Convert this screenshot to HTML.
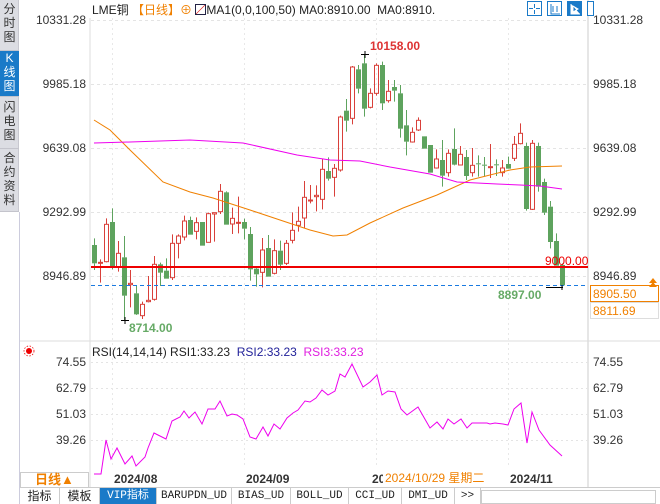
<!DOCTYPE html>
<html><head><meta charset="utf-8">
<style>
*{margin:0;padding:0;box-sizing:border-box}
body{width:660px;height:504px;background:#fff;position:relative;overflow:hidden;font-family:"Liberation Sans","Noto Sans CJK SC",sans-serif;color:#222}
.abs{position:absolute}
.side{left:0;top:0;width:19px;height:212px;background:#dcdde3;border-right:1px solid #c8c8d0}
.side div{position:absolute;left:0;width:19px;font-size:12px;line-height:14px;text-align:center;color:#333;border-bottom:1px solid #c4c4cc}
.ax{font-size:12px;color:#333;position:absolute;line-height:12px}
.tab{position:absolute;top:488px;height:16px;font-size:11px;line-height:16px;text-align:center;border-right:1px solid #ccc;color:#222;font-family:"Liberation Mono","Noto Sans CJK SC",monospace}
</style></head><body>
<div class="abs side">
 <div style="top:2px;height:49px">分<br>时<br>图</div>
 <div style="top:51px;height:46px;background:#1a7ac8;color:#fff">K<br>线<br>图</div>
 <div style="top:100px;height:49px">闪<br>电<br>图</div>
 <div style="top:151px;height:61px">合<br>约<br>资<br>料</div>
</div>
<div class="abs" style="left:0;top:212px;width:20px;height:292px;border-right:1px solid #ccd"></div>
<svg class="abs" style="left:0;top:0" width="660" height="504" id="s"></svg>

<div class="abs" style="left:92px;top:3px;font-size:12px;white-space:nowrap;line-height:14px">LME铜 <span style="color:#f08000">【日线】</span><span style="color:#f08000">⊕</span> <span style="display:inline-block;width:11px;height:11px;border:1px solid #224;vertical-align:-1px;background:linear-gradient(135deg,#fff 45%,#d22 50%,#fff 55%)"></span>MA1(0,0,100,50) MA0:8910.00 &nbsp;MA0:8910.</div>

<div class="ax" style="left:20px;top:14px;width:66px;text-align:right">10331.28</div>
<div class="ax" style="left:20px;top:78px;width:66px;text-align:right">9985.18</div>
<div class="ax" style="left:20px;top:142px;width:66px;text-align:right">9639.08</div>
<div class="ax" style="left:20px;top:206px;width:66px;text-align:right">9292.99</div>
<div class="ax" style="left:20px;top:270px;width:66px;text-align:right">8946.89</div>
<div class="ax" style="left:593px;top:14px">10331.28</div>
<div class="ax" style="left:593px;top:142px">9639.08</div>
<div class="ax" style="left:593px;top:78px">9985.18</div>
<div class="ax" style="left:593px;top:206px">9292.99</div>
<div class="ax" style="left:593px;top:270px">8946.89</div>
<div class="ax" style="left:590px;top:285px;width:69px;height:17px;border:1px solid #f08000;color:#f08000;padding:2px 0 0 2px">8905.50</div>
<div class="ax" style="left:590px;top:302px;width:69px;height:17px;border:1px solid #ddd;color:#f08000;padding:2px 0 0 2px">8811.69</div>
<div class="ax" style="left:370px;top:40px;color:#d33;font-weight:bold">10158.00</div>
<div class="ax" style="left:545px;top:255px;color:#e00">9000.00</div>
<div class="ax" style="left:498px;top:289px;color:#6a6;font-weight:bold">8897.00</div>
<div class="ax" style="left:129px;top:322px;color:#6a6;font-weight:bold">8714.00</div>

<div class="abs" style="left:92px;top:345px;font-size:12px;white-space:nowrap">RSI(14,14,14) RSI1:33.23 &nbsp;<span style="color:#22229a">RSI2:33.23</span> &nbsp;<span style="color:#e020e0">RSI3:33.23</span></div>
<div class="ax" style="left:20px;top:356px;width:66px;text-align:right">74.55</div>
<div class="ax" style="left:20px;top:382px;width:66px;text-align:right">62.79</div>
<div class="ax" style="left:20px;top:408px;width:66px;text-align:right">51.03</div>
<div class="ax" style="left:20px;top:434px;width:66px;text-align:right">39.26</div>
<div class="ax" style="left:593px;top:356px">74.55</div>
<div class="ax" style="left:593px;top:382px">62.79</div>
<div class="ax" style="left:593px;top:408px">51.03</div>
<div class="ax" style="left:593px;top:434px">39.26</div>

<div class="abs" style="left:20px;top:476px;width:69px;height:12px;"></div>
<div class="abs" style="left:20px;top:472px;width:69px;height:16px;border:1px solid #ccc;color:#f08000;font-weight:bold;font-size:13px;line-height:14px;padding-left:14px">日线▲</div>
<div class="ax" style="left:114px;top:473px;font-weight:bold">2024/08</div>
<div class="ax" style="left:246px;top:473px;font-weight:bold">2024/09</div>
<div class="ax" style="left:372px;top:473px;font-weight:bold">20</div>
<div class="ax" style="left:383px;top:472px;color:#f08000;background:#fff;padding:0 2px;height:14px;width:110px">2024/10/29 星期二</div>
<div class="ax" style="left:510px;top:473px;font-weight:bold">2024/11</div>

<div class="abs" style="left:20px;top:487px;width:640px;border-top:1px solid #ccc"></div>
<div class="tab" style="left:20px;width:40px;font-family:'Liberation Sans','Noto Sans CJK SC',sans-serif;font-size:12px">指标</div>
<div class="tab" style="left:60px;width:40px;font-family:'Liberation Sans','Noto Sans CJK SC',sans-serif;font-size:12px">模板</div>
<div class="tab" style="left:100px;width:57px;background:#1a7ac8;color:#fff">VIP指标</div>
<div class="tab" style="left:157px;width:75px">BARUPDN_UD</div>
<div class="tab" style="left:232px;width:59px">BIAS_UD</div>
<div class="tab" style="left:291px;width:58px">BOLL_UD</div>
<div class="tab" style="left:349px;width:53px">CCI_UD</div>
<div class="tab" style="left:402px;width:53px">DMI_UD</div>
<div class="tab" style="left:455px;width:26px">&gt;&gt;</div>
<div class="abs" style="left:481px;top:490px;width:175px;height:14px;border:1px solid #ccc"></div>

<script>
var s=document.getElementById('s'),h='';
function L(x1,y1,x2,y2,c,w,d){h+='<line x1="'+x1+'" y1="'+y1+'" x2="'+x2+'" y2="'+y2+'" stroke="'+c+'" stroke-width="'+(w||1)+'"'+(d?' stroke-dasharray="'+d+'"':'')+'/>';}
// frames
L(90,18,90,488,'#ddd');L(588,0,588,488,'#ccc');
L(20,341,660,341,'#ddd');
[20,84,148,212,276].forEach(function(y){L(91,y+.5,588,y+.5,'#e4e4e4',1,'3,3')});
[362,388,414,440].forEach(function(y){L(91,y+.5,588,y+.5,'#e4e4e4',1,'2,3')});
[112.5,244.5,376.5,508.5].forEach(function(x){L(x,18,x,468,'#e8e8e8',1,'2,3')});
var d4=[['g',645,700,625,720],['r',697,700,688,758],['r',583,695,565,697],['g',576,712,535,718],['r',670,712,633,725],['g',682,797,618,872],['r',760,764,720,832],['g',790,853,765,855],['r',823,857,815,867],['r',811,815,738,817],['r',703,808,678,812],['g',703,728,698,768],['g',722,746,685,746],['r',640,743,613,750],['r',618,640,613,685],['r',573,621,557,631],['g',570,614,560,614],['r',578,604,562,628],['g',576,647,576,647],['r',551,637,548,637],['r',548,552,548,635],['r',484,545,462,552],['g',487,584,484,584],['r',565,582,533,612],['r',577,579,500,610],['g',576,596,566,628],['g',612,718,591,752],['g',716,733,708,770],['r',660,727,624,772],['g',654,740,615,740],['r',662,730,628,733],['g',662,704,632,720],['r',640,700,630,705],['r',601,631,547,640],['r',574,586,530,605],['r',502,564,453,595],['r',510,513,465,520],['r',496,500,466,544],['r',418,508,387,538],['g',423,446,382,452],['r',415,442,402,500],['r',261,420,257,425],['g',242,272,207,305],['r',111,265,108,283],['g',118,176,105,190],['g',100,236,72,260],
['r',190,232,175,235],['r',106,190,100,197],['g',105,220,95,240],['r',184,212,150,218],['g',171,182,150,215],['g',190,296,165,323],['g',286,335,240,376],['r',307,336,292,338],['r',271,300,262,303],['g',319,356,319,356],['g',345,428,345,428],['r',387,414,358,416],['g',390,437,330,470],['r',370,428,358,440],['g',357,404,295,406],['r',373,405,348,406],['g',381,438,360,450],['r',406,428,354,440],['g',400,403,376,440],['g',404,407,381,440],['r',410,413,342,444],['g',403,406,388,438],['r',414,428,390,440],['g',402,416,380,416],['r',343,385,318,393],['r',310,341,280,343]];
var d5=[['g',138,327,128,332],['r',130,328,120,330],['g',138,260,128,275],['g',246,338,236,345],['g',320,426,303,445],['g',423,497,400,497],['g',495,556,490,560]];
var all=d4.map(function(c){return [c[0],30+c[1]/3,30+c[2]/3,30+c[3]/3,30+c[4]/3]}).concat(d5.map(function(c){return [c[0],100+c[1]/3,100+c[2]/3,100+c[3]/3,100+c[4]/3]}));
all.forEach(function(c,i){var x=Math.round(94.3+i*6)+.5;var col=c[0]=='g'?'#5ea35e':'#d9403a';
 L(x,c[3],x,c[1],col);L(x,c[2],x,c[4],col);
 var hh=Math.max(1,c[2]-c[1]);
 if(c[0]=='g')h+='<rect x="'+(x-2.5)+'" y="'+c[1]+'" width="5" height="'+hh+'" fill="'+col+'"/>';
 else h+='<rect x="'+(x-2)+'" y="'+c[1]+'" width="4" height="'+hh+'" fill="none" stroke="'+col+'" stroke-width="1"/>';
});
function P(pts,c,w){h+='<polyline fill="none" stroke="'+c+'" stroke-width="'+(w||1)+'" points="'+pts.map(function(p){return p.join(',')}).join(' ')+'"/>';}
P([[94,120],[110,130],[130,150],[163,182],[190,192],[213,198],[250,210],[280,220],[310,230],[333,236],[347,235],[370,223],[403,208],[437,195],[470,180],[510,170],[530,167],[562,166]],'#f08000');
P([[94,143],[130,142],[190,140],[243,143],[297,155],[330,160],[360,161],[390,167],[430,174],[457,182],[497,184],[520,185],[540,186],[562,189]],'#ee00ee');
L(91,267,588,267,'#ee0000',2);
L(91,285.5,588,285.5,'#1a7ae0',1,'4,3');
// markers
L(121,320.5,129,320.5,'#000');L(125,317,125,324,'#000');
L(361,54.5,369,54.5,'#000');L(365,51,365,58,'#000');
L(546,287.5,563,287.5,'#000');L(562,285,562,290,'#000');
// orange arrow at right
h+='<path d="M649 283 L653 278 L657 283 Z M649 287 L653 282 L657 287 Z" fill="#f08000"/>';
// rsi
P([[94,474],[101,474],[106,440],[111,459],[117,448],[125,464],[132,456],[136,466],[145,457],[148,448],[154,433],[166,439],[172,421],[180,417],[184,411],[189,418],[195,412],[202,424],[208,409],[215,409],[220,401],[227,416],[232,414],[237,415],[243,419],[250,437],[256,439],[263,427],[268,436],[274,424],[280,429],[287,418],[293,413],[298,410],[305,401],[310,402],[316,398],[322,390],[328,395],[335,391],[340,374],[345,377],[352,364],[363,387],[370,382],[377,375],[382,395],[388,391],[395,392],[401,409],[407,415],[418,407],[430,428],[437,422],[443,429],[448,419],[454,424],[461,419],[467,428],[472,423],[487,423],[490,424],[495,423],[503,424],[508,425],[514,409],[521,403],[527,443],[532,412],[539,430],[550,445],[562,456]],'#ee00ee');
// rsi icon
h+='<circle cx="29" cy="351" r="3" fill="#e00"/><circle cx="29" cy="351" r="5" fill="none" stroke="#e00" stroke-width="0.8" stroke-dasharray="1.5,1.5"/>';
// top right icons
[527,547,567].forEach(function(x,i){h+='<rect x="'+(x+.5)+'" y="1.5" width="14" height="14" fill="'+(i==2?'#1a7ac8':'#fff')+'" stroke="#1a7ac8"/>';});
h+='<rect x="587.5" y="1.5" width="6" height="14" fill="#fff" stroke="#1a7ac8"/>';
h+='<path d="M534.5 4v4M534.5 10v4M529 8.5h4M536 8.5h4" stroke="#1a7ac8"/><path d="M551 4v10h9M553 6v6M557 6v6" stroke="#1a7ac8" fill="none"/><path d="M571 4v10h9M573 6l5 3-5 3z" stroke="#fff" fill="#fff"/>';
s.innerHTML=h;
</script>
</body></html>
